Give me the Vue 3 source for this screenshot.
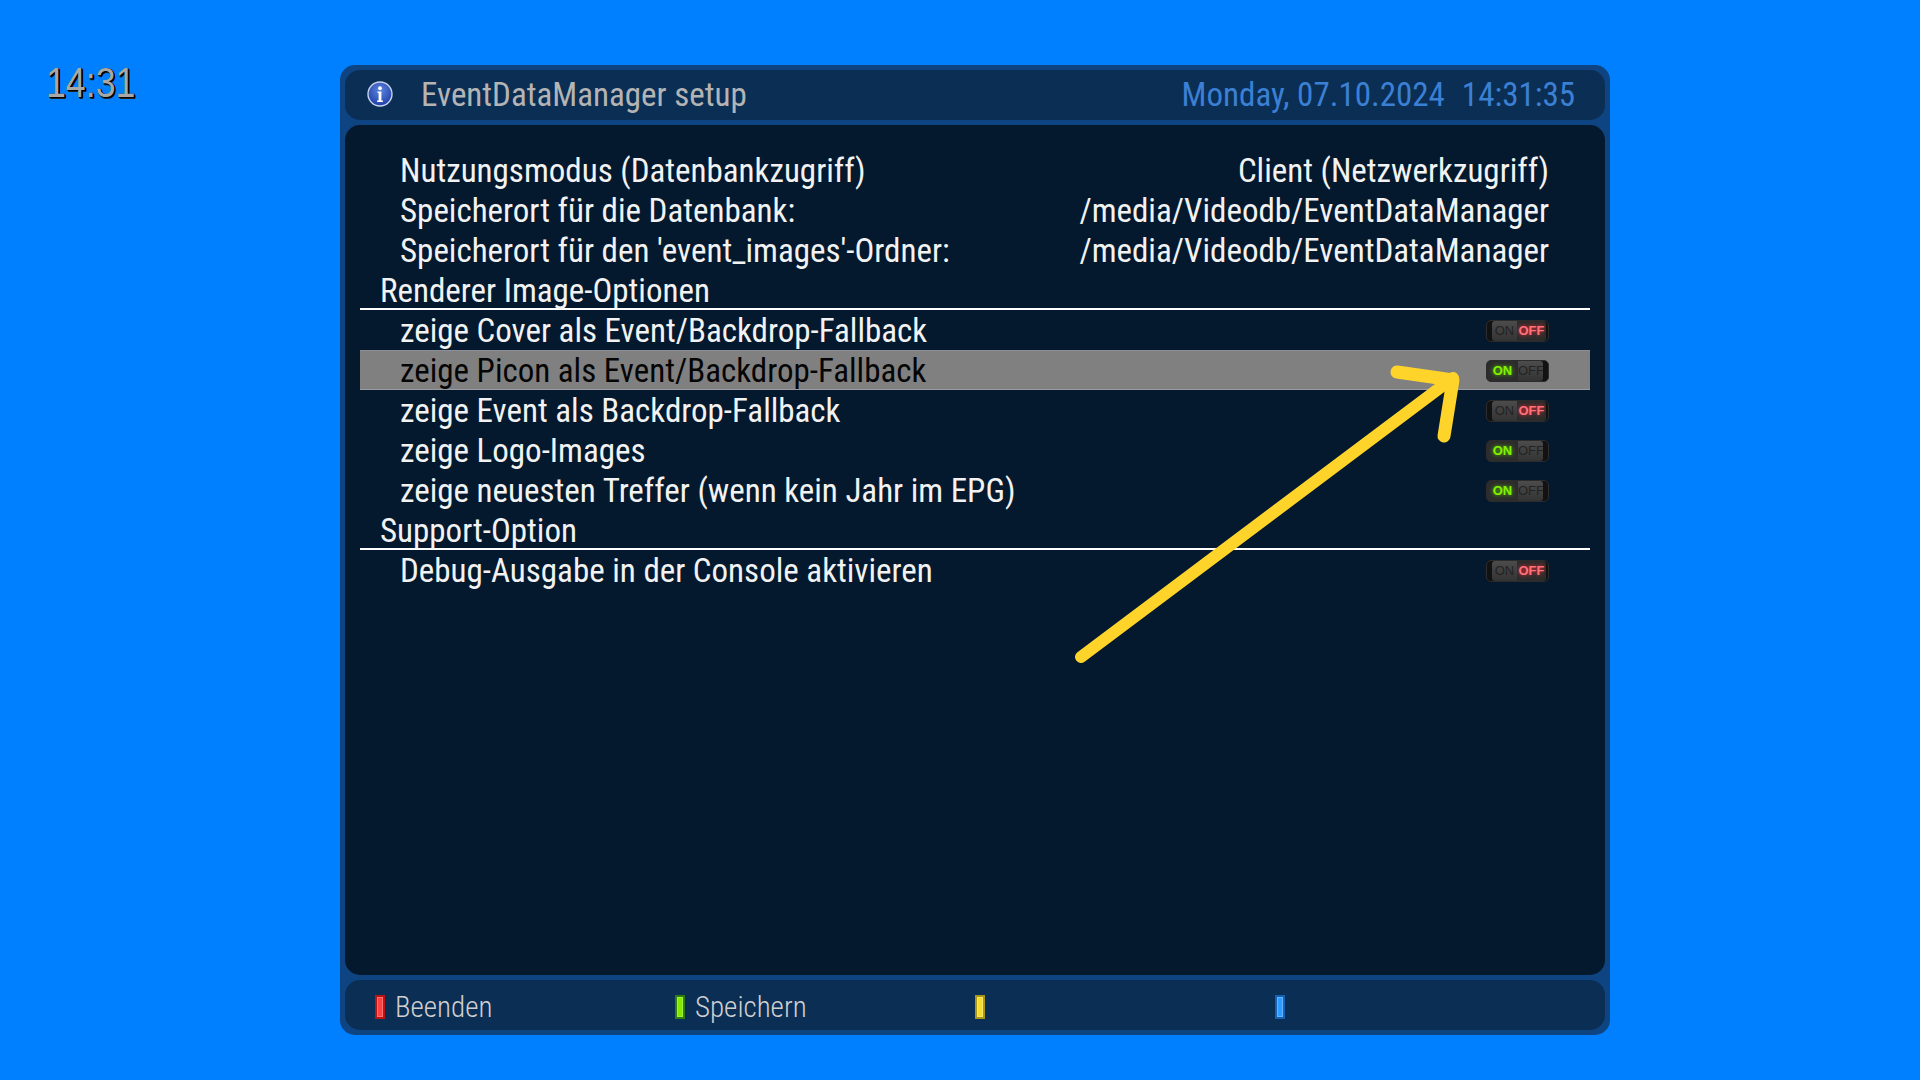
<template>
  <div class="screen">
    <div class="clock"><span>14:31</span></div>
    <div class="window">
      <header class="bar title-bar">
        <svg class="info" viewBox="0 0 26 26">
          <defs>
            <radialGradient id="infoFill" cx="50%" cy="35%" r="65%">
              <stop offset="0" stop-color="#5f86e0" />
              <stop offset="1" stop-color="#1c3fa8" />
            </radialGradient>
          </defs>
          <circle cx="13" cy="13" r="12" fill="url(#infoFill)" stroke="#c9d3ea" stroke-width="1.4" />
          <circle cx="13" cy="7.2" r="1.9" fill="#fff" />
          <path d="M10.6 10.6h3.8v9h1.5v1.4h-5.8v-1.4h1.5v-7.6h-1z" fill="#fff" />
        </svg>
        <span class="title">EventDataManager setup</span>
        <span class="date">Monday, 07.10.2024</span>
        <span class="time">14:31:35</span>
      </header>

      <main class="list">
        <template v-for="row in rows" :key="row.label">
          <div v-if="row.section" class="row section">{{ row.label }}</div>
          <div v-else class="row" :class="{ selected: row.selected }">
            <span>{{ row.label }}</span>
            <span v-if="row.value">{{ row.value }}</span>
            <div v-else class="toggle" :class="row.on ? 'on' : 'off'">
              <span class="side left">ON</span>
              <span class="side right">OFF</span>
            </div>
          </div>
        </template>
      </main>

      <footer class="bar keys">
        <div v-for="key in keys" :key="key.color" class="key">
          <i class="key-mark" :class="key.color"></i>
          <span>{{ key.label }}</span>
        </div>
      </footer>

      <svg class="arrow" viewBox="0 0 1270 970">
        <path d="M741 592 1113 313" stroke-width="12" />
        <path d="M1057 307 1113 315 1104 371" stroke-width="13" />
      </svg>
    </div>
  </div>
</template>

<script setup>
const rows = [
  { label: 'Nutzungsmodus (Datenbankzugriff)', value: 'Client (Netzwerkzugriff)' },
  { label: 'Speicherort für die Datenbank:', value: '/media/Videodb/EventDataManager' },
  { label: "Speicherort für den 'event_images'-Ordner:", value: '/media/Videodb/EventDataManager' },
  { label: 'Renderer Image-Optionen', section: true },
  { label: 'zeige Cover als Event/Backdrop-Fallback', on: false },
  { label: 'zeige Picon als Event/Backdrop-Fallback', on: true, selected: true },
  { label: 'zeige Event als Backdrop-Fallback', on: false },
  { label: 'zeige Logo-Images', on: true },
  { label: 'zeige neuesten Treffer (wenn kein Jahr im EPG)', on: true },
  { label: 'Support-Option', section: true },
  { label: 'Debug-Ausgabe in der Console aktivieren', on: false },
]

const keys = [
  { color: 'red', label: 'Beenden' },
  { color: 'green', label: 'Speichern' },
  { color: 'yellow', label: '' },
  { color: 'blue', label: '' },
]
</script>

<style>
body {
  background: #0080ff;
}
</style>

<style scoped>
.screen {
  display: flex;
  height: 1080px;
  padding-top: 65px;
  box-sizing: border-box;
  overflow: hidden;
  font-family: Roboto, "Liberation Sans", sans-serif;
  font-stretch: 75%;
}
.clock {
  width: 340px;
  flex: none;
  box-sizing: border-box;
  padding-left: 46px;
  font: 42px/36px "Liberation Sans", sans-serif;
  color: #a8a8a8;
  text-shadow: 1px 0 0 #000, 1px 1px 0 #000, 2px 1px 0 #000, 2px 2px 0 #222;
}
.clock span {
  display: inline-block;
  transform: scaleX(0.85);
  transform-origin: left;
}
.window {
  position: relative;
  width: 1270px;
  height: 970px;
  box-sizing: border-box;
  padding: 5px;
  display: flex;
  flex-direction: column;
  gap: 5px;
  background: #0e4482;
  border-radius: 15px;
}
.bar {
  height: 50px;
  flex: none;
  display: flex;
  align-items: center;
  box-sizing: border-box;
  background: #0b2e55;
  border-radius: 15px;
}
.title-bar {
  padding: 0 30px 2px 22px;
}
.info {
  width: 26px;
  height: 26px;
  flex: none;
  margin-bottom: 1px;
}
.title {
  margin-left: 28px;
  font-size: 33px;
  color: #b4b4b4;
}
.date {
  margin-left: auto;
  font-size: 33px;
  color: #3b80d4;
}
.time {
  margin-left: 17px;
  font-size: 33px;
  color: #3b80d4;
}
.list {
  flex: 1;
  padding: 25px 15px 0;
  background: #04192e;
  border-radius: 15px;
}
.row {
  height: 40px;
  display: flex;
  align-items: center;
  justify-content: space-between;
  box-sizing: border-box;
  padding: 0 41px 0 40px;
  font-size: 33px;
  color: #f2f2f2;
}
.row.section {
  padding-left: 20px;
  padding-top: 2px;
  border-bottom: 2px solid #fff;
}
.row.selected {
  background: #808080;
  border-top: 1px solid #8d8d96;
  border-bottom: 1px solid #9a9aa2;
  color: #050505;
}
.toggle {
  width: 63px;
  height: 22px;
  flex: none;
  display: flex;
  box-sizing: border-box;
  margin-top: 1px;
  background: #121212;
  border: 1px solid #2c2c2c;
  border-radius: 5px;
  font: bold 13px/20px "Liberation Sans", sans-serif;
}
.side {
  text-align: center;
  color: #232323;
  overflow: hidden;
}
.left {
  flex: 0 0 31px;
}
.right {
  flex: 1;
}
.toggle.off .left {
  flex: 0 0 25px;
  margin-left: 5px;
  font-weight: normal;
  background: linear-gradient(#4c4c4c, #333);
  border-radius: 3px 0 0 3px;
}
.toggle.off .right {
  margin-right: 2px;
  background: #2c2c2c;
  color: #ff727a;
  text-shadow: 0 0 4px #ff2a3a;
  border-radius: 0 3px 3px 0;
}
.toggle.on .left {
  background: #2c2c2c;
  color: #85f000;
  text-shadow: 0 0 4px #55cc00;
  border-radius: 3px 0 0 3px;
}
.toggle.on .right {
  margin-right: 5px;
  font-weight: normal;
  background: linear-gradient(#4c4c4c, #333);
  border-radius: 0 3px 3px 0;
}
.keys {
  display: grid;
  grid-template-columns: repeat(4, 300px);
  padding: 3px 0 0 30px;
}
.key {
  display: flex;
  align-items: center;
  gap: 10px;
  font-size: 29px;
  font-weight: 300;
  color: #d0d0d0;
  padding-top: 1px;
}
.key-mark {
  width: 10px;
  height: 24px;
  flex: none;
  box-sizing: border-box;
  margin-top: -1px;
  border: 2px solid;
  box-shadow: inset 0 0 0 1px rgba(255, 255, 255, 0.25);
}
.red { background: #ff4040; border-color: #b81414; }
.green { background: #84e800; border-color: #2e7d12; }
.yellow { background: #f5dc30; border-color: #a89416; }
.blue { background: #2f9cff; border-color: #1560b0; }
.arrow {
  position: absolute;
  inset: 0;
  width: 1270px;
  height: 970px;
  fill: none;
  stroke: #ffd42a;
  stroke-linecap: round;
  stroke-linejoin: round;
}
</style>
